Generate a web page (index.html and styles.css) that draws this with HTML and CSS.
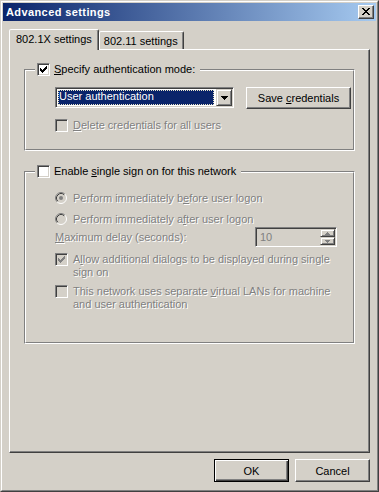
FILE: index.html
```html
<!DOCTYPE html>
<html>
<head>
<meta charset="utf-8">
<link rel="stylesheet" href="styles.css">
</head>
<body>
<div class="window">
  <div class="frame">
    <div class="titlebar">
      <span class="title">Advanced settings</span>
      <span class="close"><svg width="8" height="7" viewBox="0 0 8 7" shape-rendering="crispEdges"><path fill="#000" d="M0 0h2v1h-2z M6 0h2v1h-2z M1 1h2v1h-2z M5 1h2v1h-2z M2 2h4v1h-4z M3 3h2v1h-2z M2 4h4v1h-4z M1 5h2v1h-2z M5 5h2v1h-2z M0 6h2v1h-2z M6 6h2v1h-2z"/></svg></span>
    </div>
    <div class="tabs">
      <div class="tab active">802.1X settings</div>
      <div class="tab">802.11 settings</div>
    </div>
    <div class="panel">
      <div class="group g1">
        <div class="group-in">
          <div class="legend">
            <span class="chk"><svg width="9" height="9" viewBox="0 0 9 9" shape-rendering="crispEdges"><path fill="#000" d="M1 3h1v3h-1z M2 4h1v3h-1z M3 5h1v3h-1z M4 4h1v3h-1z M5 3h1v3h-1z M6 2h1v3h-1z M7 1h1v3h-1z"/></svg></span>
            <span class="lbl"><u>S</u>pecify authentication mode:</span>
          </div>
          <div class="combo-row">
            <div class="combo">
              <span class="combo-sel">User authentication</span>
              <span class="dd-btn"><svg width="7" height="4" viewBox="0 0 7 4" shape-rendering="crispEdges"><path fill="#000" d="M0 0h7v1h-7z M1 1h5v1h-5z M2 2h3v1h-3z M3 3h1v1h-1z"/></svg></span>
            </div>
            <button class="btn save">Save <u>c</u>redentials</button>
          </div>
          <div class="item dis r-delete">
            <span class="chk off"></span>
            <span class="lbl"><u>D</u>elete credentials for all users</span>
          </div>
        </div>
      </div>

      <div class="group g2">
        <div class="group-in g2-in">
          <div class="legend">
            <span class="chk"></span>
            <span class="lbl">Enable <u>s</u>ingle sign on for this network</span>
          </div>
          <div class="item dis r-before">
            <svg class="radio" width="12" height="12" viewBox="0 0 12 12">
              <circle cx="6" cy="6" r="5.5" fill="#d4d0c8"/>
              <path d="M2.11 9.89 A5.5 5.5 0 0 1 9.89 2.11" fill="none" stroke="#808080"/>
              <path d="M9.89 2.11 A5.5 5.5 0 0 1 2.11 9.89" fill="none" stroke="#fff"/>
              <path d="M2.82 9.18 A4.5 4.5 0 0 1 9.18 2.82" fill="none" stroke="#404040"/>
              <circle cx="6" cy="6" r="2" fill="#808080"/>
            </svg>
            <span class="lbl">Perform immediately b<u>e</u>fore user logon</span>
          </div>
          <div class="item dis r-after">
            <svg class="radio" width="12" height="12" viewBox="0 0 12 12">
              <circle cx="6" cy="6" r="5.5" fill="#d4d0c8"/>
              <path d="M2.11 9.89 A5.5 5.5 0 0 1 9.89 2.11" fill="none" stroke="#808080"/>
              <path d="M9.89 2.11 A5.5 5.5 0 0 1 2.11 9.89" fill="none" stroke="#fff"/>
              <path d="M2.82 9.18 A4.5 4.5 0 0 1 9.18 2.82" fill="none" stroke="#404040"/>
            </svg>
            <span class="lbl">Perform immediately a<u>f</u>ter user logon</span>
          </div>
          <div class="delay-row dis">
            <span class="dlbl"><u>M</u>aximum delay (seconds):</span>
            <div class="spin">
              <span class="spin-val">10</span>
              <span class="spin-btns">
                <span class="spin-btn"><svg width="5" height="3" viewBox="0 0 5 3" shape-rendering="crispEdges"><path fill="#808080" d="M2 0h1v1h-1z M1 1h3v1h-3z M0 2h5v1h-5z"/></svg></span>
                <span class="spin-btn"><svg width="5" height="3" viewBox="0 0 5 3" shape-rendering="crispEdges"><path fill="#808080" d="M0 0h5v1h-5z M1 1h3v1h-3z M2 2h1v1h-1z"/></svg></span>
              </span>
            </div>
          </div>
          <div class="item dis r-allow">
            <span class="chk off"><svg width="9" height="9" viewBox="0 0 9 9" shape-rendering="crispEdges"><path fill="#808080" d="M1 3h1v3h-1z M2 4h1v3h-1z M3 5h1v3h-1z M4 4h1v3h-1z M5 3h1v3h-1z M6 2h1v3h-1z M7 1h1v3h-1z"/></svg></span>
            <span class="lbl">A<u>l</u>low additional dialogs to be displayed during single<br>sign on</span>
          </div>
          <div class="item dis r-vlan">
            <span class="chk off"></span>
            <span class="lbl">This network uses separate <u>v</u>irtual LANs for machine<br>and user authentication</span>
          </div>
        </div>
      </div>
    </div>
    <div class="buttons">
      <button class="btn default">OK</button>
      <button class="btn">Cancel</button>
    </div>
  </div>
</div>
</body>
</html>
```

FILE: styles.css
```css
* { box-sizing: border-box; }

body {
  margin: 0;
  font-family: "Liberation Sans", Arial, sans-serif;
  font-size: 11px;
  color: #000;
  background: #d4d0c8;
}

.window {
  width: 379px;
  height: 492px;
  border: 1px solid;
  border-color: #d4d0c8 #404040 #404040 #d4d0c8;
  background: #d4d0c8;
}

.frame {
  height: 100%;
  border: 1px solid;
  border-color: #fff #808080 #808080 #fff;
  padding: 1px;
  display: flex;
  flex-direction: column;
}

.titlebar {
  height: 18px;
  flex: none;
  background: linear-gradient(to right, #0a246a, #a6caf0);
  display: flex;
  align-items: center;
  justify-content: space-between;
  padding: 0 2px 0 3px;
}

.title {
  color: #fff;
  font-weight: bold;
  font-size: 11px;
  letter-spacing: 0.4px;
}

.close {
  width: 16px;
  height: 14px;
  background: #d4d0c8;
  border: 1px solid;
  border-color: #fff #404040 #404040 #fff;
  box-shadow: inset -1px -1px #808080;
  display: flex;
  align-items: center;
  justify-content: center;
  padding-bottom: 1px;
}

.tabs {
  display: flex;
  align-items: flex-start;
  height: 20px;
  flex: none;
  margin: 8px 0 0 6px;
}

.tab {
  height: 18px;
  margin-top: 2px;
  padding: 3px 5px 0 4px;
  line-height: 13px;
  border: 1px solid;
  border-bottom: none;
  border-color: #fff #404040 transparent #fff;
  box-shadow: inset -1px 0 #808080;
  border-radius: 2px 2px 0 0;
  background: #d4d0c8;
  white-space: nowrap;
}

.tab.active {
  height: 21px;
  margin-top: 0;
  padding: 3px 6px 0 6px;
  position: relative;
  z-index: 1;
}

.panel {
  flex: none;
  height: 404px;
  margin: 0 6px;
  border: 1px solid;
  border-color: #fff #404040 #404040 #fff;
  box-shadow: inset -1px -1px #808080;
}

.group {
  margin: 0 14px;
  border: 1px solid;
  border-color: #808080 #fff #fff #808080;
}

.g1 { margin-top: 19px; }
.g2 { margin-top: 20px; }

.group-in {
  border: 1px solid;
  border-color: #fff #808080 #808080 #fff;
  padding: 0 0 17px 29px;
}

.g2-in { padding-bottom: 31px; }

.legend {
  display: flex;
  align-items: center;
  width: max-content;
  height: 13px;
  margin: -8px 0 0 -20px;
  padding: 0 5px 0 2px;
  background: #d4d0c8;
  line-height: 13px;
}

.legend .lbl { margin-left: 4px; }

.chk {
  flex: none;
  width: 13px;
  height: 13px;
  padding: 1px;
  display: flex;
  border: 1px solid;
  border-color: #808080 #fff #fff #808080;
  box-shadow: inset 1px 1px #404040, inset -1px -1px #d4d0c8;
  background: #fff;
}

.chk.off { background: #d4d0c8; }

.combo-row {
  display: flex;
  align-items: flex-start;
  gap: 12px;
  margin-top: 11px;
}

.combo {
  width: 179px;
  height: 21px;
  display: flex;
  border: 1px solid;
  border-color: #808080 #fff #fff #808080;
  box-shadow: inset 1px 1px #404040, inset -1px -1px #d4d0c8;
  background: #fff;
  padding: 1px;
}

.combo-sel {
  flex: 1;
  margin: 1px 2px 1px 1px;
  padding-left: 1px;
  background: #0a246a;
  color: #fff;
  line-height: 13px;
  outline: 1px dotted #e8e4c8;
  outline-offset: -1px;
}

.dd-btn {
  width: 16px;
  height: 17px;
  flex: none;
  display: flex;
  align-items: center;
  justify-content: center;
  background: #d4d0c8;
  border: 1px solid;
  border-color: #d4d0c8 #404040 #404040 #d4d0c8;
  box-shadow: inset 1px 1px #fff, inset -1px -1px #808080;
}

.btn {
  font-family: "Liberation Sans", Arial, sans-serif;
  font-size: 11px;
  color: #000;
  background: #d4d0c8;
  border: 1px solid;
  border-color: #fff #404040 #404040 #fff;
  box-shadow: inset -1px -1px #808080;
  padding: 0;
  width: 75px;
  height: 23px;
}

.btn.save {
  width: 105px;
  height: 22px;
}

.btn.default {
  border-color: #000;
  box-shadow: inset 1px 1px #fff, inset -1px -1px #404040, inset -2px -2px #808080;
}

.item {
  display: flex;
  align-items: flex-start;
  line-height: 13px;
}

.item .lbl { margin-left: 5px; }
.item .radio { flex: none; margin-right: 1px; }

.dis { color: #808080; text-shadow: 1px 1px #fff; }

.r-delete { margin-top: 10px; }
.r-before { margin-top: 14px; }
.r-after { margin-top: 8px; }
.r-allow { margin-top: 6px; }
.r-vlan { margin-top: 6px; }

.delay-row {
  display: flex;
  align-items: center;
  height: 20px;
  margin-top: 1px;
}

.spin {
  width: 82px;
  height: 20px;
  margin-left: auto;
  margin-right: 16px;
  display: flex;
  border: 1px solid;
  border-color: #808080 #fff #fff #808080;
  box-shadow: inset 1px 1px #404040, inset -1px -1px #d4d0c8;
  background: #d4d0c8;
  padding: 1px;
}

.spin-val {
  flex: 1;
  padding-left: 3px;
  line-height: 16px;
  text-shadow: none;
}

.spin-btns {
  display: flex;
  flex-direction: column;
  width: 15px;
}

.spin-btn {
  height: 8px;
  display: flex;
  align-items: center;
  justify-content: center;
  border: 1px solid;
  border-color: #d4d0c8 #404040 #404040 #d4d0c8;
  box-shadow: inset 1px 1px #fff, inset -1px -1px #808080;
}

.buttons {
  display: flex;
  justify-content: flex-end;
  gap: 6px;
  margin: 6px 6px 0 0;
}
```
